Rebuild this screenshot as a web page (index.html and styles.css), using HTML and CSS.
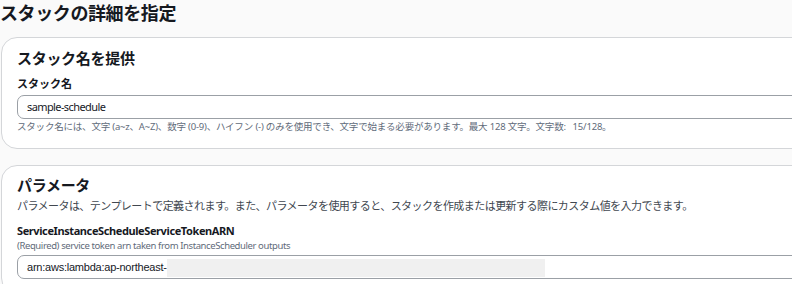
FILE: index.html
```html
<!DOCTYPE html>
<html lang="ja">
<head>
    <meta charset="UTF-8">
    <meta name="viewport" content="width=device-width, initial-scale=1.0">
    <link rel="stylesheet" href="styles.css">
    <title>スタックの詳細を指定</title>
</head>
<body>
    <div id="page">
        <h1 class="page-title">スタックの詳細を指定</h1>

        <section class="panel panel-name">
            <h2 class="panel-title">スタック名を提供</h2>
            <label class="field-label" for="stackName">スタック名</label>
            <div class="field field-name" id="stackName">sample-schedule</div>
            <p class="hint">スタック名には、文字 (a~z、A~Z)、数字 (0-9)、ハイフン (-) のみを使用でき、文字で始まる必要があります。最大 128 文字。文字数:&nbsp;&nbsp; 15/128。</p>
        </section>

        <section class="panel panel-params">
            <h2 class="panel-title">パラメータ</h2>
            <p class="panel-desc">パラメータは、テンプレートで定義されます。また、パラメータを使用すると、スタックを作成または更新する際にカスタム値を入力できます。</p>
            <label class="field-label param-label" for="tokenArn">ServiceInstanceScheduleServiceTokenARN</label>
            <p class="param-desc">(Required) service token arn taken from InstanceScheduler outputs</p>
            <div class="field field-arn" id="tokenArn">arn:aws:lambda:ap-northeast-<span class="redact"></span></div>
        </section>
    </div>
</body>
</html>
```

FILE: styles.css
```css
body {
    font-family: "Noto Sans", "Open Sans", "Noto Sans CJK JP", sans-serif;
    margin: 0;
    padding: 0;
    background-color: #fafafa;
    color: #16191f;
    overflow: hidden;
}

#page {
    margin-right: -40px;
}

.page-title {
    margin: 0 0 11px 0;
    font-size: 18px;
    line-height: 26px;
    font-weight: bold;
    letter-spacing: -0.4px;
}

.panel {
    margin-left: 1px;
    background-color: #ffffff;
    border: 1px solid #d4d6d9;
    border-radius: 16px;
    padding: 9px 15px 14px 15px;
}

.panel-params {
    margin-top: 16px;
    padding-top: 8px;
}

.panel-title {
    margin: 0;
    font-size: 15px;
    line-height: 22px;
    font-weight: bold;
    letter-spacing: -0.3px;
}

.panel-desc {
    margin: 2px 0 0 0;
    font-size: 11px;
    line-height: 16px;
    color: #414750;
    letter-spacing: -0.55px;
}

.field-label {
    display: block;
    margin-top: 7px;
    font-size: 11px;
    line-height: 16px;
    font-weight: bold;
}

.param-label {
    margin-top: 9px;
    letter-spacing: -0.4px;
}

.field {
    margin-top: 3px;
    height: 22px;
    border: 1px solid #9ba0a6;
    border-radius: 7px;
    padding-left: 9px;
    font-size: 11px;
    line-height: 22px;
    background-color: #ffffff;
}

.field-name {
    letter-spacing: -0.6px;
}

.hint {
    margin: 1px 0 0 0;
    font-size: 9.5px;
    line-height: 14px;
    color: #5f6b7a;
    letter-spacing: -0.2px;
}

.param-desc {
    margin: 0;
    font-size: 9.5px;
    line-height: 14px;
    color: #5f6b7a;
    letter-spacing: -0.4px;
}

.field-arn {
    margin-top: 2px;
    font-family: "Liberation Sans", Arial, sans-serif;
    letter-spacing: -0.23px;
}

.redact {
    display: inline-block;
    width: 378px;
    height: 18px;
    vertical-align: middle;
    background-color: #f0f0f0;
}
```
